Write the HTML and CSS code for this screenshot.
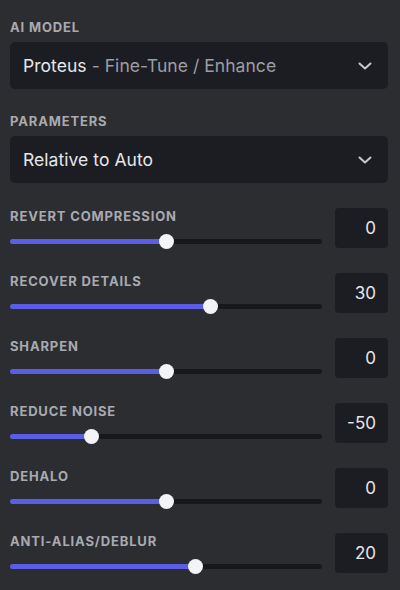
FILE: index.html
```html
<!DOCTYPE html>
<html lang="en">
<head>
<meta charset="utf-8">
<title>Enhance settings</title>
<link rel="stylesheet" href="styles.css">
</head>
<body>
<div class="panel">
  <section class="field">
    <div class="label">AI MODEL</div>
    <div class="select">
      <span class="select-text"><span class="main">Proteus</span><span class="sub"> - Fine-Tune / Enhance</span></span>
      <svg class="chev" width="14" height="8" viewBox="0 0 14 8"><path d="M1.5 1.5 L7 6.5 L12.5 1.5" fill="none" stroke="currentColor" stroke-width="2" stroke-linecap="round" stroke-linejoin="round"/></svg>
    </div>
  </section>
  <section class="field">
    <div class="label">PARAMETERS</div>
    <div class="select">
      <span class="select-text"><span class="main">Relative to Auto</span></span>
      <svg class="chev" width="14" height="8" viewBox="0 0 14 8"><path d="M1.5 1.5 L7 6.5 L12.5 1.5" fill="none" stroke="currentColor" stroke-width="2" stroke-linecap="round" stroke-linejoin="round"/></svg>
    </div>
  </section>

  <div class="rows">
    <div class="row">
      <div class="ctl">
        <div class="label">REVERT COMPRESSION</div>
        <input class="slider" type="range" min="-100" max="100" value="0" style="--fill:50%">
      </div>
      <div class="value">0</div>
    </div>
    <div class="row">
      <div class="ctl">
        <div class="label">RECOVER DETAILS</div>
        <input class="slider" type="range" min="-100" max="100" value="30" style="--fill:64.3%">
      </div>
      <div class="value">30</div>
    </div>
    <div class="row">
      <div class="ctl">
        <div class="label">SHARPEN</div>
        <input class="slider" type="range" min="-100" max="100" value="0" style="--fill:50%">
      </div>
      <div class="value">0</div>
    </div>
    <div class="row">
      <div class="ctl">
        <div class="label">REDUCE NOISE</div>
        <input class="slider" type="range" min="-100" max="100" value="-50" style="--fill:26.1%">
      </div>
      <div class="value">-50</div>
    </div>
    <div class="row">
      <div class="ctl">
        <div class="label">DEHALO</div>
        <input class="slider" type="range" min="-100" max="100" value="0" style="--fill:50%">
      </div>
      <div class="value">0</div>
    </div>
    <div class="row">
      <div class="ctl">
        <div class="label">ANTI-ALIAS/DEBLUR</div>
        <input class="slider" type="range" min="-100" max="100" value="20" style="--fill:59.5%">
      </div>
      <div class="value">20</div>
    </div>
  </div>
</div>
</body>
</html>
```
FILE: styles.css
```css
html, body {
  margin: 0;
  padding: 0;
  background: #2c2d31;
}
body {
  font-family: Inter, "Noto Sans", "Liberation Sans", sans-serif;
  color: #e4e5e8;
  width: 400px;
  height: 590px;
  overflow: hidden;
}
.panel {
  padding: 19px 12px 0 10px;
  display: flex;
  flex-direction: column;
}
.field {
  display: flex;
  flex-direction: column;
  gap: 7px;
  margin-bottom: 24px;
}
.label {
  font-size: 13px;
  line-height: 16px;
  font-weight: 700;
  letter-spacing: 0.85px;
  color: #a8aab0;
  white-space: nowrap;
}
.select {
  height: 47px;
  box-sizing: border-box;
  background: #1c1d23;
  border-radius: 5px;
  display: flex;
  align-items: center;
  justify-content: space-between;
  padding: 0 16px 0 13px;
}
.select-text {
  font-size: 17.5px;
  line-height: 20px;
  letter-spacing: 0.05px;
}
.main { color: #e6e7ea; }
.sub { color: #9c9ea5; }
.chev { color: #c9cacf; display: block; margin-top: 1px; }

.rows {
  display: flex;
  flex-direction: column;
  gap: 25px;
  margin-top: 1px;
}
.row {
  display: grid;
  grid-template-columns: 1fr 53px;
  column-gap: 13px;
  align-items: start;
}
.ctl {
  display: flex;
  flex-direction: column;
  gap: 10px;
}
.value {
  height: 40px;
  background: #1c1d23;
  border-radius: 4px;
  display: flex;
  align-items: center;
  justify-content: flex-end;
  padding-right: 12px;
  font-size: 17px;
  color: #e6e7ea;
}

.slider {
  -webkit-appearance: none;
  appearance: none;
  margin: 0;
  width: 100%;
  height: 14px;
  background: transparent;
  display: block;
}
.slider::-webkit-slider-runnable-track {
  height: 5px;
  border-radius: 3px;
  background: linear-gradient(to right, #5a5ee4 0, #5a5ee4 var(--fill), #17181c var(--fill), #17181c 100%);
}
.slider::-webkit-slider-thumb {
  -webkit-appearance: none;
  appearance: none;
  width: 15px;
  height: 15px;
  border-radius: 50%;
  background: #f3f4f7;
  margin-top: -5px;
  border: none;
}
```
